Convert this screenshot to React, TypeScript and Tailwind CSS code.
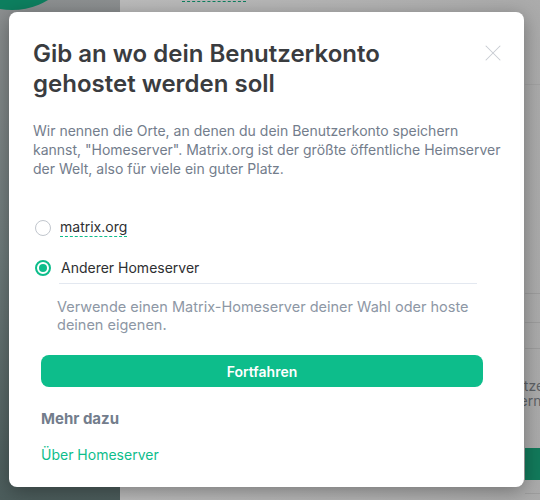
import { X } from "lucide-react";

const font = "font-['Inter','Liberation_Sans',sans-serif]";

function Backdrop() {
  return (
    <div className="flex h-full w-full">
      <aside className="relative h-full w-[120px] shrink-0 overflow-hidden bg-gradient-to-b from-[#8d9091] via-[#6f7c7c] to-[#4c5d5c]">
        <div className="absolute -left-[58px] -top-[130px] size-[140px] rounded-full bg-[#0d7f5f]" />
      </aside>
      <main className="flex h-full flex-1 flex-col bg-gradient-to-r from-[#bcbcbc] via-[#b4b4b4] to-[#a9a9a9]">
        <div className="ml-[62px] mt-px h-px w-[64px] border-t border-dashed border-[#0d7f5f]" />
        <div className="ml-[405px] mt-[82px] h-px border-t border-[#a2a2a2]" />
        <div className="ml-[405px] mt-[208px] h-px border-t border-[#9d9d9d]" />
        <div className="ml-[405px] mt-[28px] h-px border-t border-[#9d9d9d]" />
        <div className="ml-[405px] mt-[25px] h-px border-t border-[#9d9d9d]" />
        <div className="ml-[370px] mt-[29px] whitespace-nowrap text-sm leading-[15px] text-[#5e6266]">
          Benutzername
          <br />
          Modern
        </div>
        <div className="ml-[405px] mt-[40px] h-[32px] bg-[#127a5b]" />
        <div className="ml-[405px] mt-[13px] h-px border-t border-[#9d9d9d]" />
      </main>
    </div>
  );
}

function Radio({ checked }: { checked?: boolean }) {
  return (
    <span
      className={
        checked
          ? "flex size-4 shrink-0 items-center justify-center rounded-full border-2 border-[#0dbd8b]"
          : "flex size-4 shrink-0 rounded-full border border-[#c1c6cd]"
      }
    >
      {checked && <span className="size-2 rounded-full bg-[#0dbd8b]" />}
    </span>
  );
}

export default function App() {
  return (
    <div className={`relative h-[500px] w-[540px] overflow-hidden ${font}`}>
      <Backdrop />

      <div className="absolute inset-0 flex items-start justify-start pl-[9px] pt-[12px]">
        <div className="relative flex h-[475px] w-[515px] flex-col rounded-lg bg-white pl-6 pr-[16px] shadow-[0_4px_20px_rgba(0,0,0,0.35)]">
          <button
            type="button"
            aria-label="Close dialog"
            className="absolute right-[17px] top-[27px] text-[#c8ccd2]"
          >
            <X size={28} strokeWidth={0.9} />
          </button>

          <h1 className="mt-[27px] pr-16 text-[24px] font-semibold leading-[30px] text-[#3a3c3f]">
            Gib an wo dein Benutzerkonto gehostet werden soll
          </h1>

          <p className="mt-[22px] text-[14px] leading-[19px] text-[#737d8c]">
            Wir nennen die Orte, an denen du dein Benutzerkonto speichern
            kannst, "Homeserver". Matrix.org ist der größte öffentliche
            Heimserver der Welt, also für viele ein guter Platz.
          </p>

          <label className="mt-[40px] flex items-center gap-[9px] pl-[2px]">
            <Radio />
            <span className="border-b border-dashed border-[#0dbd8b] text-[14px] leading-[18px] text-[#2e2f32]">
              matrix.org
            </span>
          </label>

          <label className="mt-[22px] flex items-center gap-[10px] pl-[2px]">
            <Radio checked />
            <span className="text-[14px] leading-[18px] text-[#2e2f32]">
              Anderer Homeserver
            </span>
          </label>
          <div className="ml-[26px] mr-[31px] mt-[6px] h-px bg-[#e3e8f0]" />

          <p className="ml-[24px] mr-[29px] mt-[14px] text-[14.5px] leading-[18px] text-[#8d97a5]">
            Verwende einen Matrix-Homeserver deiner Wahl oder hoste deinen
            eigenen.
          </p>

          <div className="mr-[25px] pl-2">
            <button
              type="button"
              className="mt-[21px] flex h-[32px] w-full items-center justify-center rounded-lg bg-[#0dbd8b] text-[14px] font-semibold text-white"
            >
              Fortfahren
            </button>

            <p className="mt-[22px] text-[15px] font-bold leading-[20px] text-[#737d8c]">
              Mehr dazu
            </p>
            <a className="mt-[16px] block text-[14px] leading-[20px] text-[#0dbd8b]">
              Über Homeserver
            </a>
          </div>
        </div>
      </div>
    </div>
  );
}
